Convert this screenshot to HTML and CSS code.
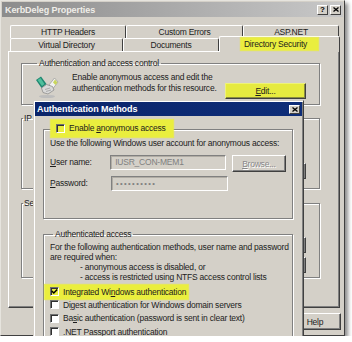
FILE: index.html
```html
<!DOCTYPE html>
<html lang="en">
<head>
  <meta charset="UTF-8">
  <title>KerbDeleg Properties</title>
  <link rel="stylesheet" href="styles.css">
</head>
<body>

  <div class="shot">

    <!-- property sheet in the back -->
    <div class="win">
      <div class="caption caption-inactive">
        <span>KerbDeleg Properties</span>
        <span class="caption-btns">
          <span class="cbtn">?</span>
          <span class="cbtn">
            <svg width="6" height="5" viewBox="0 0 6 5"><path d="M0.5 0.5 L5.5 4.5 M5.5 0.5 L0.5 4.5" stroke="#000" stroke-width="1.3"/></svg>
          </span>
        </span>
      </div>

      <div class="tabs">
        <div class="tabrow">
          <div class="tab t-http">HTTP Headers</div>
          <div class="tab t-custom">Custom Errors</div>
          <div class="tab t-asp">ASP.NET</div>
        </div>
        <div class="tabrow">
          <div class="tab t-vdir">Virtual Directory</div>
          <div class="tab t-docs">Documents</div>
          <div class="tab t-dirsec active"><span class="hl hl-tab">Directory Security</span></div>
        </div>
      </div>

      <div class="panel">
        <fieldset class="grp grp-auth">
          <legend>Authentication and access control</legend>
          <div class="auth-row">
            <svg class="hands" width="24" height="24" viewBox="0 0 24 24">
              <ellipse cx="12" cy="21.5" rx="8" ry="1.6" fill="#bdbdbd"/>
              <path d="M1 5 L6 1.5 L11.5 9 L6.5 13 Z" fill="#1d8670"/>
              <path d="M2.5 5 L5.5 3 L9.5 9 L7 11 Z" fill="#4fbf9c"/>
              <path d="M23 7 L19.5 3 L14 10 L18 13.5 Z" fill="#f2f2f2" stroke="#8c8c8c" stroke-width="0.6"/>
              <path d="M20 4.5 L22.5 7.5 L20.5 10 L18 7.5 Z" fill="#c9d65c"/>
              <path d="M6.5 13 L11.5 9.5 L17.5 11.5 L19 15 L13 19 L8 17.5 Z" fill="#d9d9d9" stroke="#767676" stroke-width="0.6"/>
              <path d="M10 14.5 L15 13 M11 16.5 L16 15" stroke="#8a8a8a" stroke-width="0.6"/>
            </svg>
            <div class="auth-text">Enable anonymous access and edit the<br>authentication methods for this resource.</div>
            <div class="btn btn-edit"><span><u>E</u>dit...</span></div>
          </div>
        </fieldset>

        <fieldset class="grp grp-ip">
          <legend>IP</legend>
          <div class="btn-col">
            <div class="btn btn-back"></div>
          </div>
        </fieldset>

        <fieldset class="grp grp-sec">
          <legend>Se</legend>
          <div class="btn-col">
            <div class="btn btn-back"></div>
            <div class="btn btn-back"></div>
          </div>
        </fieldset>
      </div>

      <div class="win-foot">
        <div class="btn btn-help">Help</div>
      </div>
    </div>

    <!-- Authentication Methods dialog on top -->
    <div class="dlg">
      <div class="caption caption-active">
        <span>Authentication Methods</span>
        <span class="cbtn cbtn-close">
          <svg width="6" height="5" viewBox="0 0 6 5"><path d="M0.5 0.5 L5.5 4.5 M5.5 0.5 L0.5 4.5" stroke="#000" stroke-width="1.3"/></svg>
        </span>
      </div>

      <div class="dlg-body">
        <fieldset class="grp grp-anon">
          <legend>
            <span class="hl hl-anon"><span class="chk"></span><span>Enable <u>a</u>nonymous access</span></span>
          </legend>
          <div class="line">Use the following Windows user account for anonymous access:</div>
          <div class="field-row field-user">
            <span class="field-label"><u>U</u>ser name:</span>
            <span class="field">IUSR_CON-MEM1</span>
            <span class="btn btn-browse"><span><u>B</u>rowse...</span></span>
          </div>
          <div class="field-row">
            <span class="field-label"><u>P</u>assword:</span>
            <span class="field field-pwd">••••••••••</span>
          </div>
        </fieldset>

        <fieldset class="grp grp-authd">
          <legend>Authenticated access</legend>
          <div class="lines">
            <div>For the following authentication methods, user name and password</div>
            <div>are required when:</div>
            <div class="dash">- anonymous access is disabled, or</div>
            <div class="dash">- access is restricted using NTFS access control lists</div>
          </div>
          <div class="chk-row">
            <span class="hl hl-row">
              <span class="chk">
                <svg width="7" height="7" viewBox="0 0 7 7"><path d="M0.8 3 L2.8 5 L6.2 1.4" fill="none" stroke="#000" stroke-width="1.5"/></svg>
              </span>
              <span>Integrated Wi<u>n</u>dows authentication</span>
            </span>
          </div>
          <div class="chk-row"><span class="chk"></span><span>Di<u>g</u>est authentication for Windows domain servers</span></div>
          <div class="chk-row"><span class="chk"></span><span>Ba<u>s</u>ic authentication (password is sent in clear text)</span></div>
          <div class="chk-row"><span class="chk"></span><span>.NET Pass<u>p</u>ort authentication</span></div>
        </fieldset>
      </div>
    </div>

  </div>

</body>
</html>
```

FILE: styles.css
```css
* {
  box-sizing: border-box;
  margin: 0;
  padding: 0;
}

body {
  background: #fff;
  font-family: "Liberation Sans", Arial, sans-serif;
  font-size: 8.5px;
  letter-spacing: -0.22px;
  color: #1c1c1c;
}

u {
  text-underline-offset: 1px;
}

.shot {
  position: relative;
  width: 345px;
  height: 336px;
  overflow: hidden;
  box-shadow: 3px 3px 4px rgba(0, 0, 0, 0.45);
}

/* window frame */
.win {
  display: flex;
  flex-direction: column;
  height: 100%;
  padding: 1px;
  background: #d4d0c8;
  border: 1px solid;
  border-color: #e6e4de #404040 #404040 #e6e4de;
}

.caption {
  display: flex;
  align-items: center;
  justify-content: space-between;
  height: 15px;
  padding: 0 2px 0 3px;
  font-size: 9px;
  font-weight: bold;
  letter-spacing: -0.1px;
  white-space: nowrap;
}

.caption-inactive {
  background: linear-gradient(90deg, #8c8c8c, #c8c8c8);
  color: #f0eee9;
}

.caption-btns {
  display: flex;
  gap: 2px;
}

.cbtn {
  display: flex;
  align-items: center;
  justify-content: center;
  width: 11px;
  height: 10px;
  background: #d4d0c8;
  border: 1px solid;
  border-color: #fff #404040 #404040 #fff;
  color: #000;
  font-size: 8px;
  font-weight: bold;
}

/* tabs */
.tabs {
  margin: 6px 3px 0 8px;
}

.tabrow {
  display: flex;
  align-items: flex-start;
  height: 13px;
}

.tabrow:first-child {
  margin-top: 2px;
}

.tab {
  height: 13px;
  line-height: 13px;
  text-align: center;
  white-space: nowrap;
  background: #d4d0c8;
  border: 1px solid;
  border-bottom: 0;
  border-color: #fff #404040 #fff #fff;
  border-radius: 2px 2px 0 0;
}

.t-http { width: 116px; }
.t-custom { width: 117px; }
.t-asp { width: 96px; }
.t-vdir { width: 113px; }
.t-docs { width: 96px; }
.t-dirsec { width: 121px; }

.tab.active {
  position: relative;
  z-index: 2;
  height: 16px;
  margin-top: -2px;
  line-height: 14px;
}

/* highlighter marks */
.hl {
  background: #eaee3e;
  box-shadow: 0 0 1px 1px rgba(234, 238, 62, 0.8);
}

.hl-tab {
  padding: 1px 11px 1px 3px;
}

/* tab page */
.panel {
  height: 257px;
  margin: 0 3px 0 6px;
  padding: 0 19px 0 12px;
  border: 1px solid;
  border-color: #fff #404040 #404040 #fff;
  box-shadow: inset -1px -1px 0 #808080;
}

.grp {
  min-width: 0;
  border: 1px solid #808080;
  box-shadow: 1px 1px 0 #fff, inset 1px 1px 0 #fff;
}

.grp legend {
  margin-left: 2px;
  padding: 0 2px;
  line-height: 11px;
  white-space: nowrap;
}

.grp-auth {
  margin-top: 6px;
  padding: 6px 13px 5px 13px;
}

.auth-row {
  display: flex;
  align-items: flex-start;
}

.hands {
  flex: none;
}

.auth-text {
  margin: -3px 0 0 13px;
  line-height: 11px;
  white-space: nowrap;
}

.btn {
  display: flex;
  align-items: center;
  justify-content: center;
  white-space: nowrap;
  background: #d4d0c8;
  border: 1px solid;
  border-color: #fff #404040 #404040 #fff;
  box-shadow: inset -1px -1px 0 #808080;
}

.btn-edit {
  width: 81px;
  height: 16px;
  margin: 8px 0 0 auto;
  background: #e6ea40;
  border-color: #eef27a #404040 #404040 #eef27a;
  box-shadow: inset -1px -1px 0 #8a8c40;
}

.grp-ip {
  height: 76px;
  margin-top: 8px;
}

.grp-sec {
  height: 80px;
  margin-top: 9px;
}

.grp-ip legend,
.grp-sec legend {
  margin-left: 1px;
  padding: 0 1px;
}

.btn-col {
  display: flex;
  flex-direction: column;
  align-items: flex-end;
  gap: 4px;
  padding-right: 13px;
}

.grp-ip .btn-col {
  padding-top: 39px;
}

.grp-sec .btn-col {
  padding-top: 28px;
}

.btn-back {
  width: 80px;
  height: 16px;
}

.win-foot {
  display: flex;
  justify-content: flex-end;
  margin-top: 5px;
  padding-right: 2px;
}

.btn-help {
  width: 52px;
  height: 17px;
}

/* dialog */
.dlg {
  position: absolute;
  top: 100px;
  left: 33px;
  width: 271px;
  height: 245px;
  padding: 1px;
  background: #d4d0c8;
  border: 1px solid;
  border-color: #d4d0c8 #404040 #404040 #d4d0c8;
  box-shadow: inset 1px 1px 0 #fff, inset -1px -1px 0 #808080;
}

.caption-active {
  height: 14px;
  padding: 0 2px;
  background: linear-gradient(90deg, #0a246a, #0e2d78);
  color: #fff;
}

.cbtn-close {
  height: 9px;
}

.dlg-body {
  padding: 0 9px 0 8px;
  white-space: nowrap;
}

.grp-anon {
  height: 96px;
  margin-top: 7px;
  padding: 2px 6px 0 6px;
}

.grp-anon legend {
  margin-left: 4px;
  padding: 0 2px;
}

.chk {
  display: inline-flex;
  align-items: center;
  justify-content: center;
  flex: none;
  width: 9px;
  height: 9px;
  background: #fff;
  border: 1px solid;
  border-color: #707070 #fff #fff #707070;
  box-shadow: inset 1px 1px 0 #303030;
}

.hl .chk {
  background: transparent;
}

.hl-anon {
  display: inline-flex;
  align-items: center;
  gap: 4px;
  margin: -3px -7px -3px -5px;
  padding: 3px 7px 3px 5px;
}

.line {
  line-height: 11px;
}

.field-row {
  display: flex;
  align-items: flex-start;
  margin-top: 4px;
}

.field-user {
  margin-top: 6px;
}

.field-label {
  width: 61px;
  line-height: 15px;
}

.field {
  width: 117px;
  height: 15px;
  padding-left: 4px;
  line-height: 13px;
  color: #808080;
  border: 1px solid;
  border-color: #808080 #fff #fff #808080;
  box-shadow: inset 1px 1px 0 #b0aca4;
}

.field-pwd {
  font-size: 7.5px;
  letter-spacing: 1.4px;
}

.btn-browse {
  width: 55px;
  height: 17px;
  margin-left: 6px;
  color: #888;
  text-shadow: 1px 1px 0 #fff;
}

.grp-authd {
  margin-top: 10px;
  padding: 2px 6px 0 6px;
}

.grp-authd legend {
  margin-left: 3px;
}

.lines {
  line-height: 10px;
}

.dash {
  padding-left: 30px;
}

.chk-row {
  display: flex;
  align-items: center;
  gap: 4px;
  height: 13.3px;
}

.lines + .chk-row {
  margin-top: 3px;
}

.hl-row {
  display: inline-flex;
  align-items: center;
  gap: 4px;
  margin-left: -5px;
  padding: 2px 2px 2px 5px;
}
```
